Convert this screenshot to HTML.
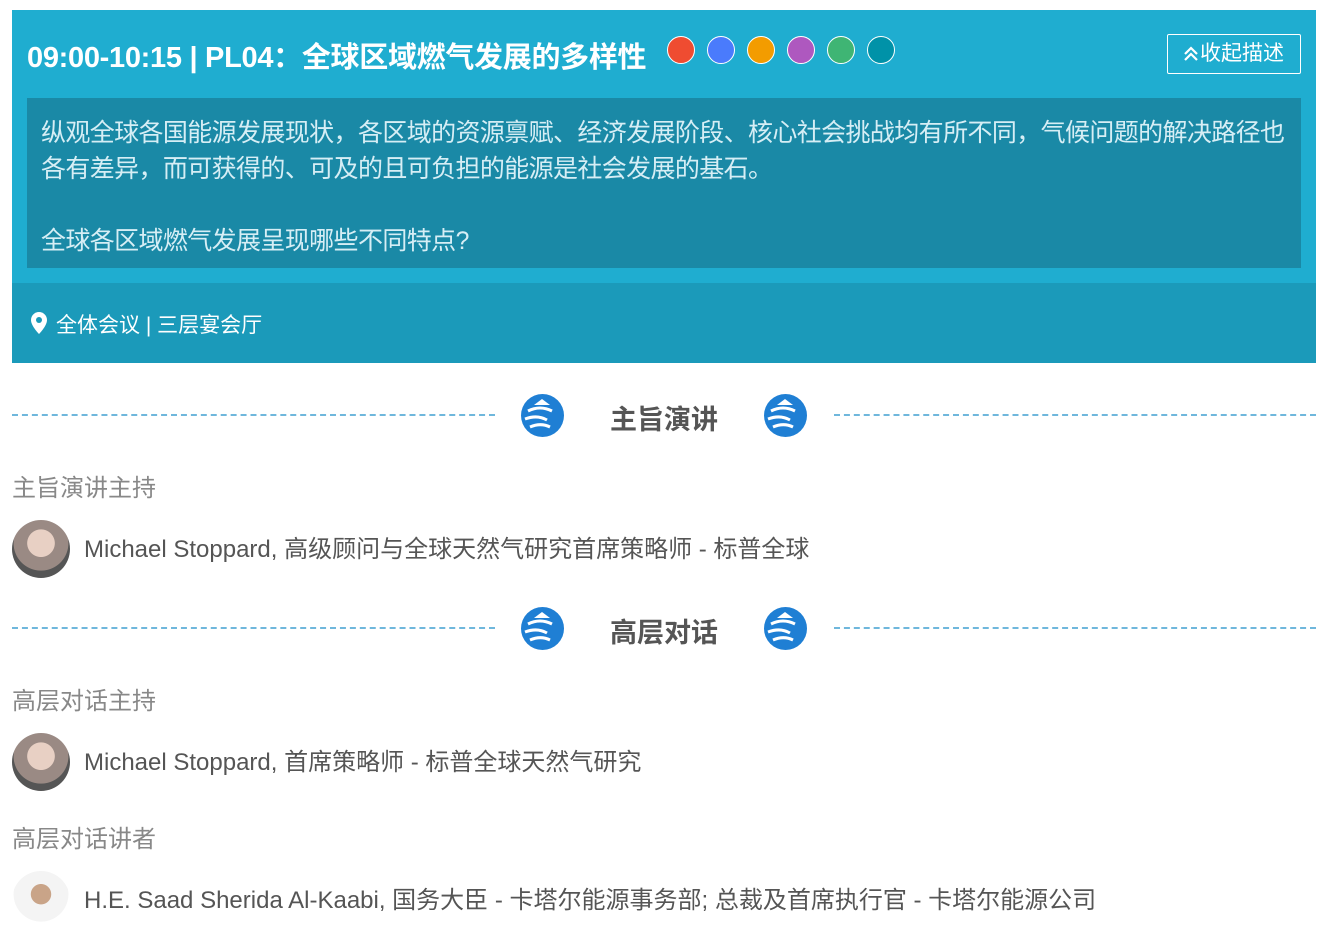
<!DOCTYPE html>
<html><head><meta charset="utf-8"><style>
*{margin:0;padding:0;box-sizing:border-box}
body{width:1326px;height:952px;background:#fff;font-family:"Liberation Sans","Noto Sans CJK SC",sans-serif;position:relative;overflow:hidden}
.abs{position:absolute}
.hdr{left:12px;top:10px;width:1304px;height:273px;background:#1fadd0}
.loc{left:12px;top:283px;width:1304px;height:80px;background:#1b9aba}
.title{left:27px;top:34px;color:#fff;font-weight:bold;font-size:29px;white-space:nowrap;letter-spacing:-0.3px}
.dot{top:36px;width:28px;height:28px;border-radius:50%;border:1px solid #fff}
.btn{left:1167px;top:34px;width:134px;height:40px;border:1px solid #fff;border-radius:2px;color:#fff;font-size:21px;line-height:38px;padding-left:14px}
.desc{left:27px;top:98px;width:1274px;height:170px;background:#1a89a6;color:#d6eef5;font-size:25px;line-height:36px;padding:17px 0 0 14px;letter-spacing:-0.62px}
.loct{left:30px;top:309px;color:#fff;font-size:21px}
.dash{top:414px;height:0;border-top:2px dashed #6fb7dc}
.sec{top:398px;font-size:27px;font-weight:bold;color:#555}
.lbl{left:12px;color:#888;font-size:24px}
.av{left:12px;width:58px;height:58px;border-radius:50%;background:radial-gradient(circle at 50% 40%,#e8d0c4 0 30%,#9a8a84 31% 60%,#555 61%);}
.name{left:84px;color:#555;font-size:24px;white-space:nowrap}
</style></head><body>
<div class="abs hdr"></div>
<div class="abs loc"></div>
<div class="abs title">09:00-10:15 | PL04：全球区域燃气发展的多样性</div>
<div class="abs dot" style="left:667px;background:#ef4c31"></div>
<div class="abs dot" style="left:707px;background:#4a7bfc"></div>
<div class="abs dot" style="left:747px;background:#f39c00"></div>
<div class="abs dot" style="left:787px;background:#ae58bf"></div>
<div class="abs dot" style="left:827px;background:#3fb574"></div>
<div class="abs dot" style="left:867px;background:#0092a8"></div>
<div class="abs btn"><svg width="18" height="16" viewBox="0 0 18 16" style="vertical-align:-1px"><path d="M3 9l6-6 6 6M3 15l6-6 6 6" fill="none" stroke="#fff" stroke-width="2.2"/></svg>收起描述</div>
<div class="abs desc">纵观全球各国能源发展现状，各区域的资源禀赋、经济发展阶段、核心社会挑战均有所不同，气候问题的解决路径也各有差异，而可获得的、可及的且可负担的能源是社会发展的基石。<br><br>全球各区域燃气发展呈现哪些不同特点?</div>
<div class="abs loct"><svg width="18" height="24" viewBox="0 0 18 24" style="vertical-align:-3px;margin-right:8px"><path d="M9 1C4.6 1 1 4.6 1 9c0 6 8 14 8 14s8-8 8-14c0-4.4-3.6-8-8-8z" fill="#fff"/><circle cx="9" cy="9" r="3" fill="#1b9aba"/></svg>全体会议 | 三层宴会厅</div>

<div class="abs dash" style="left:12px;width:483px"></div>
<div class="abs dash" style="left:834px;width:482px"></div>
<svg class="abs" style="left:520px;top:393px" width="45" height="45" viewBox="0 0 45 45"><circle cx="22.5" cy="22.5" r="21.5" fill="#1f7fd4"/><path d="M8 18c8-4 16-4 24 0M5 26c8-3 15-3 22 1M10 34c7-3 14-3 20 0" stroke="#fff" stroke-width="3" fill="none"/><path d="M14 12l8-6 8 6z" fill="#fff"/></svg>
<svg class="abs" style="left:763px;top:393px" width="45" height="45" viewBox="0 0 45 45"><circle cx="22.5" cy="22.5" r="21.5" fill="#1f7fd4"/><path d="M8 18c8-4 16-4 24 0M5 26c8-3 15-3 22 1M10 34c7-3 14-3 20 0" stroke="#fff" stroke-width="3" fill="none"/><path d="M14 12l8-6 8 6z" fill="#fff"/></svg>
<div class="abs sec" style="left:610px">主旨演讲</div>
<div class="abs lbl" style="top:468px">主旨演讲主持</div>
<div class="abs av" style="top:520px"></div>
<div class="abs name" style="top:529px">Michael Stoppard, 高级顾问与全球天然气研究首席策略师 - 标普全球</div>

<div class="abs dash" style="left:12px;width:483px;top:627px"></div>
<div class="abs dash" style="left:834px;width:482px;top:627px"></div>
<svg class="abs" style="left:520px;top:606px" width="45" height="45" viewBox="0 0 45 45"><circle cx="22.5" cy="22.5" r="21.5" fill="#1f7fd4"/><path d="M8 18c8-4 16-4 24 0M5 26c8-3 15-3 22 1M10 34c7-3 14-3 20 0" stroke="#fff" stroke-width="3" fill="none"/><path d="M14 12l8-6 8 6z" fill="#fff"/></svg>
<svg class="abs" style="left:763px;top:606px" width="45" height="45" viewBox="0 0 45 45"><circle cx="22.5" cy="22.5" r="21.5" fill="#1f7fd4"/><path d="M8 18c8-4 16-4 24 0M5 26c8-3 15-3 22 1M10 34c7-3 14-3 20 0" stroke="#fff" stroke-width="3" fill="none"/><path d="M14 12l8-6 8 6z" fill="#fff"/></svg>
<div class="abs sec" style="left:610px;top:611px">高层对话</div>
<div class="abs lbl" style="top:681px">高层对话主持</div>
<div class="abs av" style="top:733px"></div>
<div class="abs name" style="top:742px">Michael Stoppard, 首席策略师 - 标普全球天然气研究</div>
<div class="abs lbl" style="top:819px">高层对话讲者</div>
<div class="abs av" style="top:871px;background:radial-gradient(circle at 50% 40%,#c9a488 0 22%,#f4f4f4 23% 60%,#fff 61%)"></div>
<div class="abs name" style="top:880px">H.E. Saad Sherida Al-Kaabi, 国务大臣 - 卡塔尔能源事务部; 总裁及首席执行官 - 卡塔尔能源公司</div>
</body></html>
